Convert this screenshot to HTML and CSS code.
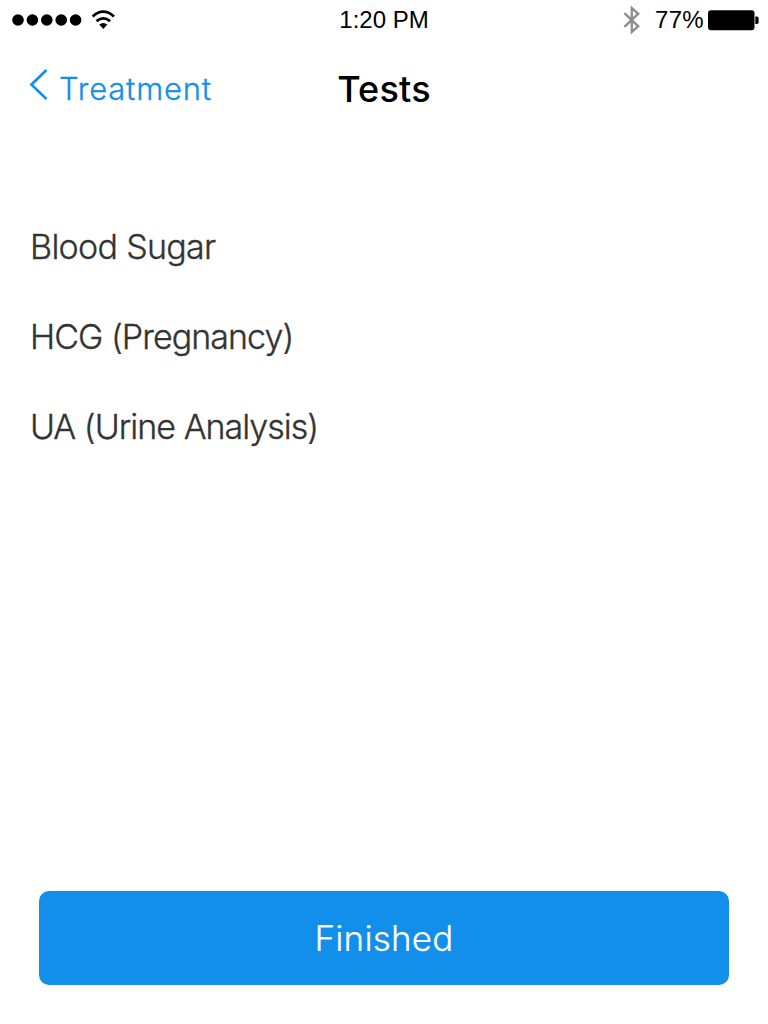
FILE: index.html
```html
<!DOCTYPE html>
<html lang="en">
<head>
<meta charset="utf-8">
<title>Tests</title>
<link rel="stylesheet" href="styles.css">
</head>
<body>
<div class="screen">
  <header class="status">
    <div class="status-left">
      <svg class="signal" width="70" height="12" viewBox="0 0 70 12"><circle cx="6" cy="6" r="5.8"/><circle cx="20.4" cy="6" r="5.8"/><circle cx="34.8" cy="6" r="5.8"/><circle cx="49.2" cy="6" r="5.8"/><circle cx="63.6" cy="6" r="5.8"/></svg>
      <svg class="wifi" width="24" height="20" viewBox="0 0 24 20"><path d="M.6 6.400Q11.300 -3.200 22 6.400M4.500 11.100Q11.300 5.500 18.100 11.100" fill="none" stroke="#000" stroke-width="2.700"/><path d="M7.200 14.600Q11.300 11.200 15.400 14.600L11.300 19Z"/></svg>
    </div>
    <time class="clock">1:20 PM</time>
    <div class="status-right">
      <svg class="bluetooth" width="18" height="28" viewBox="0 0 18 28"><path d="M1.400 7.200L15.200 20.300L8.800 26V2L15.200 7.700L1.400 20.800" fill="none" stroke="#8f8f8f" stroke-width="2.400"/></svg>
      <span class="percent">77%</span>
      <svg class="battery" width="51" height="21" viewBox="0 0 51 21"><rect x="0" y="0.300" width="46.500" height="20" rx="3"/><path d="M47.300 6.500H49Q50.600 6.500 50.600 8.200V12.200Q50.600 13.900 49 13.900H47.300Z"/></svg>
    </div>
  </header>
  <nav class="nav">
    <a class="back"><svg class="chevron" width="20" height="32" viewBox="0 0 20 32"><path d="M17.500 1L2.500 15.600L17.500 30" fill="none" stroke="#128eeb" stroke-width="2.700"/></svg><span class="back-label">Treatment</span></a>
    <h1 class="title">Tests</h1>
  </nav>
  <ul class="tests">
    <li class="test sugar">Blood Sugar</li>
    <li class="test hcg">HCG (Pregnancy)</li>
    <li class="test urine">UA (Urine Analysis)</li>
  </ul>
  <button class="finish">Finished</button>
</div>
</body>
</html>
```
FILE: styles.css
```css
* { box-sizing: border-box; }
body { margin: 0; background: #fff; font-family: Inter, "Liberation Sans", sans-serif; }
.screen { width: 768px; height: 1024px; display: flex; flex-direction: column; overflow: hidden; }
.status, .nav { display: grid; grid-template-columns: 1fr auto 1fr; }
.status { height: 40px; align-items: center; padding: 0 9px 0 12px; font: 24px/40px "Liberation Sans", sans-serif; }
.status-left, .status-right { display: flex; align-items: center; }
.status-left { gap: 10px; }
.status-right { justify-content: flex-end; }
.percent { margin: 0 4px 0 14px; letter-spacing: 0.3px; }
.clock { letter-spacing: 0; margin-left: -3px; }
.nav { height: 98px; align-items: center; padding: 0 30px; }
.back { display: flex; align-items: center; color: #128eeb; }
.chevron { margin: -9px 10px 0 -1px; }
.back-label { font-size: 31px; font-weight: 300; line-height: 40px; letter-spacing: 0.8px; -webkit-text-stroke: 0.3px #128eeb; }
.title { margin: 0; font-size: 36px; line-height: 44px; font-weight: 500; letter-spacing: 0.2px; }
.tests { list-style: none; margin: 64px 0 0; padding: 0 30px; }
.test { height: 90px; line-height: 89px; font-size: 34px; font-weight: 300; color: #333; -webkit-text-stroke: 0.35px #333; }
.sugar { letter-spacing: -0.7px; }
.hcg { letter-spacing: -0.95px; }
.urine { letter-spacing: -0.98px; }
.finish { width: 690px; height: 94px; margin: auto 39px 39.500px; border: 0; border-radius: 10px; background: #128eeb; color: #fff; font: 300 35px/44px Inter, "Liberation Sans", sans-serif; letter-spacing: 0.2px; -webkit-text-stroke: 0.2px #fff; }
```
